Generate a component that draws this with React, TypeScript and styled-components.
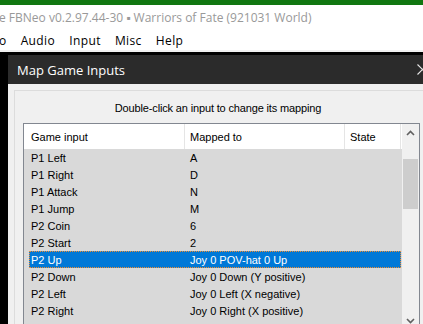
import React from 'react';
import styled, { createGlobalStyle } from 'styled-components';

const GlobalStyle = createGlobalStyle`
  html, body {
    margin: 0;
    padding: 0;
    background: #000;
    overflow: hidden;
  }
  body {
    width: 423px;
    height: 324px;
  }
`;

type Mapping = { input: string; mapped: string };

const mappings: Mapping[] = [
  { input: 'P1 Left', mapped: 'A' },
  { input: 'P1 Right', mapped: 'D' },
  { input: 'P1 Attack', mapped: 'N' },
  { input: 'P1 Jump', mapped: 'M' },
  { input: 'P2 Coin', mapped: '6' },
  { input: 'P2 Start', mapped: '2' },
  { input: 'P2 Up', mapped: 'Joy 0 POV-hat 0 Up' },
  { input: 'P2 Down', mapped: 'Joy 0 Down (Y positive)' },
  { input: 'P2 Left', mapped: 'Joy 0 Left (X negative)' },
  { input: 'P2 Right', mapped: 'Joy 0 Right (X positive)' },
  { input: 'P2 Attack', mapped: 'Joy 0 Button 1' },
];

const SELECTED = 'P2 Up';

const Chevron: React.FC<{ down?: boolean }> = ({ down }) => (
  <svg width="9" height="6" viewBox="0 0 9 6">
    <path
      d={down ? 'M1 1 L4.5 4.5 L8 1' : 'M1 5 L4.5 1.5 L8 5'}
      fill="none"
      stroke="#606060"
      strokeWidth="1.6"
    />
  </svg>
);

const App: React.FC = () => {
  return (
    <Screen>
      <GlobalStyle />
      <AccentBar />
      <TitleRow>
        <span>e FBNeo v0.2.97.44-30 ▪ Warriors of Fate (921031 World)</span>
      </TitleRow>
      <MenuBar>
        <MenuItem $cut>o</MenuItem>
        <MenuItem>Audio</MenuItem>
        <MenuItem>Input</MenuItem>
        <MenuItem>Misc</MenuItem>
        <MenuItem>Help</MenuItem>
      </MenuBar>
      <MenuEdge />
      <GameArea>
        <Dialog>
          <DialogTitle>
            <span>Map Game Inputs</span>
            <svg width="11" height="11" viewBox="0 0 11 11">
              <path d="M0.5 0.5 L10.5 10.5 M10.5 0.5 L0.5 10.5" stroke="#e8e8e8" strokeWidth="1.1" />
            </svg>
          </DialogTitle>
          <DialogBody>
            <GroupBox>
              <Caption>Double-click an input to change its mapping</Caption>
              <ListBox>
                <ListMain>
                  <Header>
                    <HeaderCell>Game input</HeaderCell>
                    <HeaderCell>Mapped to</HeaderCell>
                    <HeaderCell>State</HeaderCell>
                  </Header>
                  <Rows>
                    {mappings.map((m) => (
                      <Row key={m.input} $selected={m.input === SELECTED}>
                        <InputCell>{m.input}</InputCell>
                        <MappedCell>{m.mapped}</MappedCell>
                        <StateCell />
                      </Row>
                    ))}
                  </Rows>
                </ListMain>
                <ScrollBar>
                  <ScrollButton>
                    <Chevron />
                  </ScrollButton>
                  <Track>
                    <Thumb />
                  </Track>
                  <ScrollButton>
                    <Chevron down />
                  </ScrollButton>
                </ScrollBar>
              </ListBox>
            </GroupBox>
          </DialogBody>
        </Dialog>
      </GameArea>
    </Screen>
  );
};

export default App;

const Screen = styled.div`
  width: 423px;
  height: 324px;
  overflow: hidden;
  display: flex;
  flex-direction: column;
  background: #000;
`;

const AccentBar = styled.div`
  height: 5px;
  background: #117711;
  flex-shrink: 0;
`;

const TitleRow = styled.div`
  height: 25px;
  background: #fff;
  display: flex;
  align-items: center;
  flex-shrink: 0;
  white-space: nowrap;
  font-family: "Open Sans", "Noto Sans", sans-serif;
  font-size: 12px;
  color: #999;

  span {
    margin-left: -1px;
  }
`;

const MenuBar = styled.div`
  height: 20px;
  background: #fff;
  display: flex;
  align-items: center;
  gap: 14px;
  flex-shrink: 0;
  font-family: "Open Sans", "Noto Sans", sans-serif;
  font-size: 12px;
  letter-spacing: 0.4px;
  color: #000;
`;

const MenuItem = styled.span<{ $cut?: boolean }>`
  margin-left: ${(p) => (p.$cut ? '-1px' : '0')};
  line-height: 21px;
  padding-top: 1px;
`;

const MenuEdge = styled.div`
  height: 2px;
  background: #f0f0f0;
  flex-shrink: 0;
`;

const GameArea = styled.div`
  flex: 1;
  padding: 3px 0 0 8px;
  background: #000;
`;

const Dialog = styled.div`
  width: 430px;
  height: 300px;
  background: #f0f0f0;
  display: flex;
  flex-direction: column;
`;

const DialogTitle = styled.div`
  height: 29px;
  background: #2b2b2b;
  display: flex;
  align-items: center;
  justify-content: space-between;
  padding: 0 10px 0 9px;
  font-family: "Open Sans", "Noto Sans", sans-serif;
  font-size: 13px;
  color: #fff;
  flex-shrink: 0;
`;

const DialogBody = styled.div`
  flex: 1;
  padding: 6px 0 0 6px;
`;

const GroupBox = styled.div`
  width: 420px;
  height: 260px;
  border: 1px solid #dcdcdc;
  border-right: none;
  padding: 10px 0 0 8px;
`;

const Caption = styled.div`
  height: 14px;
  line-height: 14px;
  padding-right: 30px;
  margin-bottom: 8px;
  text-align: center;
  font-family: "Liberation Sans", Arial, sans-serif;
  font-size: 11px;
  letter-spacing: -0.15px;
  color: #000;
`;

const ListBox = styled.div`
  width: 395px;
  height: 205px;
  border: 1px solid #828790;
  display: flex;
  background: #d9d9d9;
`;

const ListMain = styled.div`
  width: 378px;
  display: flex;
  flex-direction: column;
  font-family: "Liberation Sans", Arial, sans-serif;
  font-size: 11px;
  color: #000;
`;

const Header = styled.div`
  height: 25px;
  background: #fff;
  display: grid;
  grid-template-columns: 161px 160px 56px 1fr;
`;

const HeaderCell = styled.div`
  display: flex;
  align-items: center;
  padding-left: 5px;
  border-right: 1px solid #e5e5e5;

  &:first-child {
    padding-left: 7px;
  }
`;

const Rows = styled.div`
  flex: 1;
  overflow: hidden;
  padding-left: 5px;
`;

const Row = styled.div<{ $selected?: boolean }>`
  height: 17px;
  width: 372px;
  box-sizing: border-box;
  display: grid;
  grid-template-columns: 155px 160px 1fr;
  align-items: center;
  background: ${(p) => (p.$selected ? '#0078d7' : 'transparent')};
  color: ${(p) => (p.$selected ? '#fff' : '#000')};
  outline: ${(p) => (p.$selected ? '1px dotted #f08c30' : 'none')};
  outline-offset: -1px;
  white-space: nowrap;
`;

const InputCell = styled.span`
  padding-left: 2px;
`;

const MappedCell = styled.span`
  padding-left: 6px;
`;

const StateCell = styled.span``;

const ScrollBar = styled.div`
  width: 17px;
  background: #f0f0f0;
  display: flex;
  flex-direction: column;
`;

const ScrollButton = styled.div`
  height: 17px;
  display: flex;
  align-items: center;
  justify-content: center;
  flex-shrink: 0;
`;

const Track = styled.div`
  flex: 1;
  padding: 18px 1px 0 1px;
`;

const Thumb = styled.div`
  height: 50px;
  background: #cdcdcd;
`;
